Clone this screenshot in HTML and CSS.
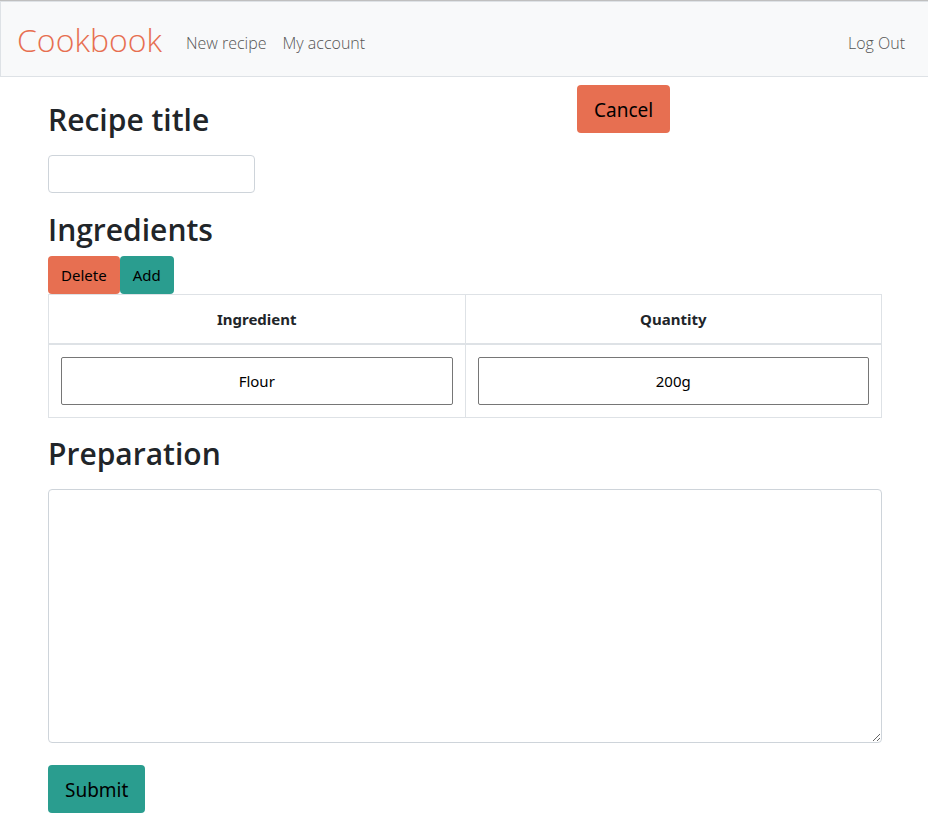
FILE: index.html
```html
<!DOCTYPE html>
<html lang="en">
<head>
<meta charset="utf-8">
<title>Cookbook</title>
<link rel="stylesheet" href="styles.css">
</head>
<body>
<nav class="navbar">
  <a class="brand" href="#">Cookbook</a>
  <a class="nav-link" href="#">New recipe</a>
  <a class="nav-link" href="#">My account</a>
  <a class="nav-link logout" href="#">Log Out</a>
</nav>
<main>
  <form class="recipe">
    <div class="top">
      <div class="title-group">
        <h2><label for="title">Recipe title</label></h2>
        <input class="field" id="title" type="text">
      </div>
      <div class="cancel-group">
        <button class="btn btn-large btn-red" type="button">Cancel</button>
      </div>
    </div>
    <h2 class="ingredients-heading">Ingredients</h2>
    <div class="actions">
      <button class="btn btn-red" type="button">Delete</button>
      <button class="btn btn-green" type="button">Add</button>
    </div>
    <table>
      <thead>
        <tr><th id="ingredient" scope="col">Ingredient</th><th id="quantity" scope="col">Quantity</th></tr>
      </thead>
      <tbody>
        <tr>
          <td><input type="text" value="Flour" aria-labelledby="ingredient"></td>
          <td><input type="text" value="200g" aria-labelledby="quantity"></td>
        </tr>
      </tbody>
    </table>
    <h2 class="preparation-heading"><label for="preparation">Preparation</label></h2>
    <textarea class="field" id="preparation" rows="10"></textarea>
    <button class="btn btn-large btn-green" type="submit">Submit</button>
  </form>
</main>
</body>
</html>
```
FILE: styles.css
```css
* {
  box-sizing: border-box;
}

body {
  margin: 0;
  border-top: 1px solid #bfbfbf;
  background: #fff;
  color: #212529;
  font: 15px/24px "Noto Sans", "Open Sans", sans-serif;
}

.navbar {
  display: flex;
  align-items: center;
  min-height: 76px;
  padding: 9px 15px 8px 16px;
  border: 1px solid #dee2e6;
  border-right: 0;
  background: #f8f9fa;
  font-family: "Open Sans", sans-serif;
  font-weight: 300;
}

.navbar a {
  text-decoration: none;
}

.brand {
  margin-right: 16px;
  color: #e76f51;
  font-size: 32px;
  line-height: 48px;
}

.nav-link {
  padding: 12px 8px 6px;
  color: #555;
  font-size: 16px;
}

.logout {
  margin-left: auto;
}

.recipe {
  padding: 8px 46px 24px 48px;
}

.top {
  display: flex;
}

.title-group {
  flex: 0 0 529px;
  padding-top: 16px;
}

h2 {
  margin: 0;
  font-family: "Open Sans", sans-serif;
  font-size: 30px;
  font-weight: 600;
  line-height: 38px;
}

.field {
  display: block;
  border: 1px solid #ced4da;
  border-radius: 4px;
  background: #fff;
  font: inherit;
}

#title {
  width: 207px;
  height: 38px;
  margin-top: 16px;
  padding: 6px 12px;
}

.ingredients-heading {
  margin: 18px 0 7px;
}

.actions {
  display: flex;
}

.btn {
  padding: 6px 12px;
  border: 1px solid transparent;
  border-radius: 4px;
  color: #000;
  font: inherit;
}

.btn-large {
  padding: 9px 16px 7px;
  font-size: 19px;
  line-height: 30px;
}

.btn-red {
  background: #e76f51;
}

.btn-green {
  background: #2a9d8f;
}

table {
  width: 100%;
  border-collapse: collapse;
  table-layout: fixed;
}

th,
td {
  padding: 12px;
  border: 1px solid #dee2e6;
  text-align: center;
}

th {
  border-bottom-width: 2px;
}

td input {
  display: block;
  width: 100%;
  height: 48px;
  border: 1px solid #767676;
  border-radius: 2px;
  color: #000;
  font: inherit;
  text-align: center;
}

.preparation-heading {
  margin: 17px 0 16px;
}

#preparation {
  width: 100%;
  height: 254px;
  margin-bottom: 22px;
  padding: 6px 12px;
  resize: vertical;
}
```
